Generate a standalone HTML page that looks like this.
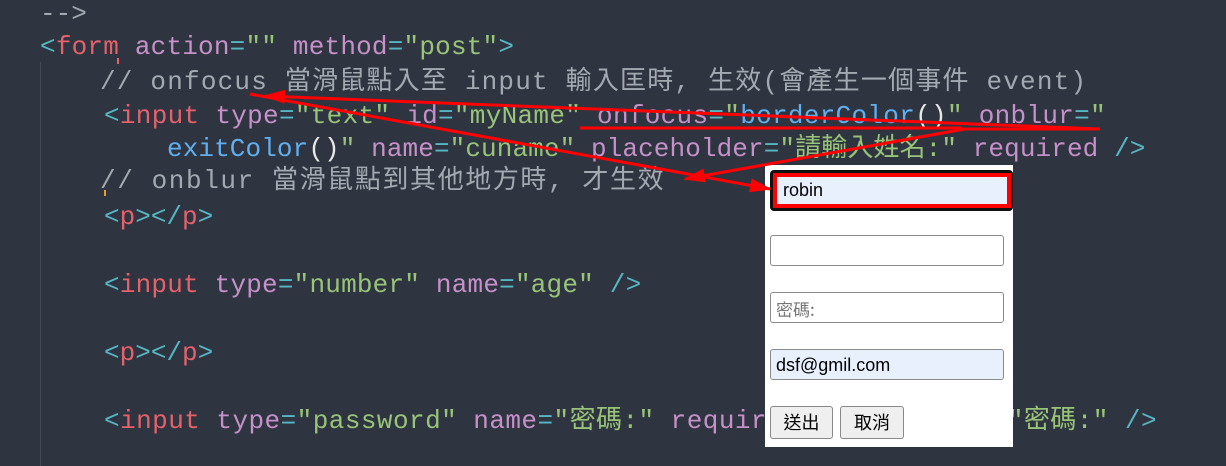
<!DOCTYPE html>
<html><head><meta charset="utf-8"><style>
body{margin:0;width:1226px;height:466px;background:#2f3540;overflow:hidden;position:relative;font-family:"Liberation Mono","Noto Sans CJK TC",monospace;font-size:26px;}
.l{position:absolute;white-space:pre;color:#abb2bf;line-height:34px;}
.t{color:#e5616b}.a{color:#c690c9}.s{color:#98c379}.p{color:#56b6c2}.c{color:#a3a9b1}.f{color:#61afef}.w{color:#e8e8e8}
.box{position:absolute;left:765px;top:165px;width:248px;height:282px;background:#fff;}
.in{position:absolute;left:5px;width:234px;height:31px;border:1px solid #8a8a8a;border-radius:3px;box-sizing:border-box;font-family:"Liberation Sans","Noto Sans CJK TC",sans-serif;font-size:18px;line-height:31px;padding-left:5px;color:#000}
.btn{position:absolute;top:241px;height:33px;border:1px solid #888;border-radius:3px;background:#efefef;box-sizing:border-box;font-family:"Noto Sans CJK TC",sans-serif;font-size:18px;text-align:center;line-height:31px}
</style></head><body>
<div style="position:absolute;left:40px;top:62px;width:1px;height:404px;background:#454b56"></div>
<div class="l" style="left:40px;top:-3px"><span class="c">--&gt;</span></div>
<div class="l" style="left:40px;top:30px;letter-spacing:0.2px"><span class="p">&lt;</span><span class="t">form</span> <span class="a">action</span><span class="p">=</span><span class="s">""</span> <span class="a">method</span><span class="p">=</span><span class="s">"post"</span><span class="p">&gt;</span></div>
<div class="l" style="left:100px;top:65px;letter-spacing:1.2px"><span class="c">// onfocus 當滑鼠點入至 input 輸入匡時, 生效(會產生一個事件 event)</span></div>
<div class="l" style="left:104px;top:99px;letter-spacing:0.3px"><span class="p">&lt;</span><span class="t">input</span> <span class="a">type</span><span class="p">=</span><span class="s">"text"</span> <span class="a">id</span><span class="p">=</span><span class="s">"myName"</span> <span class="a">onfocus</span><span class="p">=</span><span class="s">"</span><span class="f">borderColor</span><span class="w">()</span><span class="s">"</span> <span class="a">onblur</span><span class="p">=</span><span class="s">"</span></div>
<div class="l" style="left:167px;top:132px;letter-spacing:0.1px"><span class="f">exitColor</span><span class="w">()</span><span class="s">"</span> <span class="a">name</span><span class="p">=</span><span class="s">"cuname"</span> <span class="a">placeholder</span><span class="p">=</span><span class="s">"請輸入姓名:"</span> <span class="a">required</span> <span class="p">/&gt;</span></div>
<div class="l" style="left:100px;top:164px;letter-spacing:1.6px"><span class="c">// onblur 當滑鼠點到其他地方時, 才生效</span></div>
<div class="l" style="left:104px;top:200px"><span class="p">&lt;</span><span class="t">p</span><span class="p">&gt;&lt;/</span><span class="t">p</span><span class="p">&gt;</span></div>
<div class="l" style="left:104px;top:268px;letter-spacing:0.2px"><span class="p">&lt;</span><span class="t">input</span> <span class="a">type</span><span class="p">=</span><span class="s">"number"</span> <span class="a">name</span><span class="p">=</span><span class="s">"age"</span> <span class="p">/&gt;</span></div>
<div class="l" style="left:104px;top:336px"><span class="p">&lt;</span><span class="t">p</span><span class="p">&gt;&lt;/</span><span class="t">p</span><span class="p">&gt;</span></div>
<div class="l" style="left:104px;top:404px;letter-spacing:0.45px"><span class="p">&lt;</span><span class="t">input</span> <span class="a">type</span><span class="p">=</span><span class="s">"password"</span> <span class="a">name</span><span class="p">=</span><span class="s">"密碼:"</span> <span class="a">required placeholder</span><span class="p">=</span><span class="s">"密碼:"</span> <span class="p">/&gt;</span></div>
<div class="box">
<div class="in" style="left:5px;top:5px;width:243px;height:41px;border:2px solid #111;border-radius:4px;padding:0;background:#111"><div style="position:absolute;left:1px;top:1px;right:0;bottom:1px;border:4px solid #f00;background:#e8f0fe;padding-left:6px;line-height:27px">robin</div></div>
<div class="in" style="top:70px"></div>
<div class="in" style="top:127px;color:#777;font-family:'Noto Sans CJK TC',sans-serif;font-size:17px">密碼:</div>
<div class="in" style="top:184px;background:#e8f0fe">dsf@gmil.com</div>
<div class="btn" style="left:5px;width:63px">送出</div>
<div class="btn" style="left:75px;width:64px">取消</div>
</div>
<svg width="1226" height="466" style="position:absolute;left:0;top:0">
<defs><marker id="m2" markerWidth="22" markerHeight="14" refX="20" refY="7" orient="auto" markerUnits="userSpaceOnUse"><path d="M0,0 L22,7 L0,14z" fill="#f00"/></marker></defs>
<g stroke="#f00" stroke-width="3" fill="none">
<line x1="580" y1="128" x2="962" y2="128"/>
<line x1="962" y1="129" x2="1100" y2="129"/>
<line x1="1100" y1="129" x2="265" y2="96" marker-end="url(#m2)"/>
<line x1="250" y1="94" x2="770" y2="189" marker-end="url(#m2)"/>
<line x1="965" y1="129" x2="685" y2="179" marker-end="url(#m2)"/>
</g>
<rect x="117" y="58" width="2" height="6" fill="#e5616b"/>
<rect x="104" y="190" width="2" height="6" fill="#e5a020"/>
</svg>
</body></html>
